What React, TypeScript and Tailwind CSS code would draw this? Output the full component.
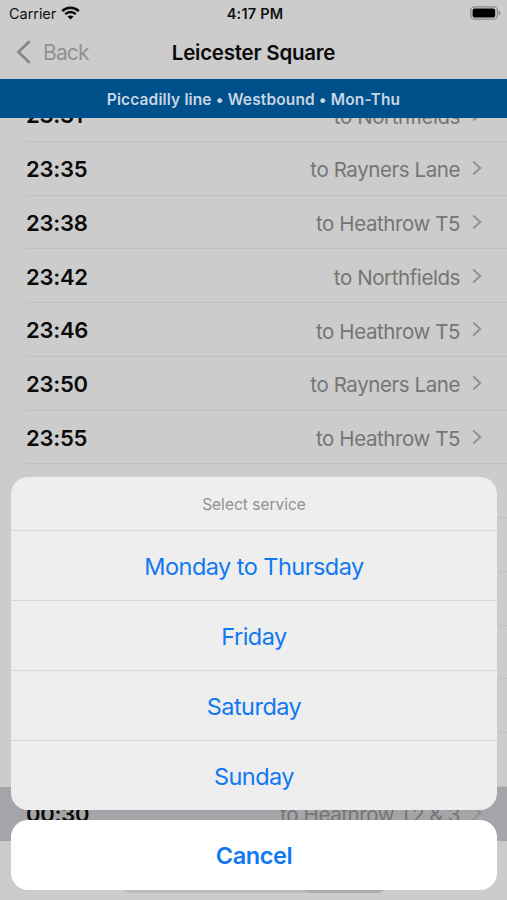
import { ReactNode } from "react";

type Departure = { time: string; to: string; highlight?: boolean };

const departures: Departure[] = [
  { time: "23:31", to: "Northfields" },
  { time: "23:35", to: "Rayners Lane" },
  { time: "23:38", to: "Heathrow T5" },
  { time: "23:42", to: "Northfields" },
  { time: "23:46", to: "Heathrow T5" },
  { time: "23:50", to: "Rayners Lane" },
  { time: "23:55", to: "Heathrow T5" },
  { time: "", to: "" },
  { time: "", to: "" },
  { time: "", to: "" },
  { time: "", to: "" },
  { time: "", to: "" },
  { time: "", to: "" },
  { time: "00:30", to: "Heathrow T2 & 3", highlight: true },
];

const services = ["Monday to Thursday", "Friday", "Saturday", "Sunday"];

function WifiIcon() {
  return (
    <svg className="-mt-[2px] ml-[5px] h-[14px] w-[19px]" viewBox="0 0 19 14" fill="none" stroke="#0a0a0a">
      <path d="M1.2 5.1C5.9.6 13.1.6 17.8 5.1" strokeWidth="2.6" />
      <path d="M4.2 8.2C7.2 5.3 11.8 5.3 14.8 8.2" strokeWidth="2.4" />
      <path d="M9.5 13.5 6.5 10.5C8.2 9 10.8 9 12.5 10.5Z" fill="#0a0a0a" stroke="none" />
    </svg>
  );
}

function BatteryIcon() {
  return (
    <svg className="-mt-px h-[14px] w-[31px]" viewBox="0 0 31 14" fill="none">
      <rect x="0.8" y="0.8" width="26.6" height="12.4" rx="3.8" stroke="#8b8b8b" strokeWidth="1.3" />
      <rect x="2.6" y="2.6" width="22.6" height="8.8" rx="2" fill="#000" />
      <path d="M28.6 4.6c2.4.6 2.4 4.2 0 4.8Z" fill="#8b8b8b" />
    </svg>
  );
}

function Chevron() {
  return (
    <svg className="h-4 w-[10px]" viewBox="0 0 10 16" fill="none">
      <path d="M1.2 1.6 8.2 8l-7 6.4" stroke="#929292" strokeWidth="2" />
    </svg>
  );
}

function DepartureRow({ time, to, highlight }: Departure) {
  return (
    <li className={`flex h-[53.77px] shrink-0 pl-[25px] ${highlight ? "bg-[#a5a5a9]" : ""}`}>
      <div
        className={`flex flex-1 items-center border-b-[1.5px] pt-[3px] pr-[25px] pl-[1px] ${
          highlight ? "border-transparent" : "border-[#c0c0c1]"
        }`}
      >
        {time && (
          <>
            <span className="text-[22px] font-semibold tracking-[-0.25px] text-[#0b0b0b]">{time}</span>
            <span className="mt-[2px] ml-auto text-[20.5px] tracking-[-0.42px] text-[#757575]">to {to}</span>
            <span className="-mt-[3px] ml-3">
              <Chevron />
            </span>
          </>
        )}
      </div>
    </li>
  );
}

function SheetOption({ children }: { children: ReactNode }) {
  return (
    <button className="flex h-[70px] w-full items-center justify-center border-t border-[#d8d8d9] pt-[3px] text-[23.5px] tracking-[-0.54px] text-[#1079f2]">
      {children}
    </button>
  );
}

export default function App() {
  return (
    <div className="relative flex h-[900px] w-[507px] flex-col overflow-hidden bg-[#cccccc] font-['Inter',sans-serif]">
      <header className="h-[79px] shrink-0">
        <div className="grid h-[27px] grid-cols-3 items-center pr-[6px] pl-[9px] text-[#111]">
          <div className="flex items-center text-[14.5px] tracking-[-0.05px]">
            Carrier
            <WifiIcon />
          </div>
          <div className="text-center text-[14.5px] font-semibold tracking-[0.2px]">4:17 PM</div>
          <div className="flex justify-end">
            <BatteryIcon />
          </div>
        </div>
        <div className="grid h-[50px] grid-cols-[1fr_auto_1fr] items-center pt-[2px]">
          <div className="flex items-center pl-[16px] text-[21px] tracking-[-0.85px] text-[#919191]">
            <svg className="-mt-[2px] mr-[12px] h-6 w-[15px]" viewBox="0 0 15 24" fill="none">
              <path d="M13.6 1.2 2.4 12l11.2 10.8" stroke="#888" strokeWidth="2.7" />
            </svg>
            Back
          </div>
          <h1 className="text-[20.5px] font-semibold tracking-[-0.23px] text-[#0a0a0a]">Leicester Square</h1>
          <div />
        </div>
      </header>

      <div className="flex h-[39px] shrink-0 items-center justify-center bg-[#00508c] pt-[2px] text-[15.5px] font-semibold tracking-[0.13px] text-[#c8d6e2]">
        Piccadilly line • Westbound • Mon-Thu
      </div>

      <main className="flex-1 overflow-hidden">
        <ul className="-mt-[30px] flex flex-col">
          {departures.map((d, i) => (
            <DepartureRow key={i} {...d} />
          ))}
        </ul>
        <div className="mx-auto mt-[11px] flex h-[41px] w-[267px] justify-end rounded-[11px] bg-[#bdbdbe]">
          <div className="w-[86px] rounded-[11px] bg-[#adadad]" />
        </div>
      </main>

      <div className="absolute right-[10px] bottom-[10px] left-[11px] flex flex-col gap-[10px]">
        <section className="overflow-hidden rounded-[17px] bg-[#eeeeee]">
          <div className="flex h-[53px] items-center justify-center pt-[3px] text-[15.5px] text-[#919192]">
            Select service
          </div>
          {services.map((s) => (
            <SheetOption key={s}>{s}</SheetOption>
          ))}
        </section>
        <button className="h-[70px] rounded-[17px] bg-white pt-[2px] text-[23.5px] font-semibold tracking-[-0.4px] text-[#1079f2]">
          Cancel
        </button>
      </div>
    </div>
  );
}
